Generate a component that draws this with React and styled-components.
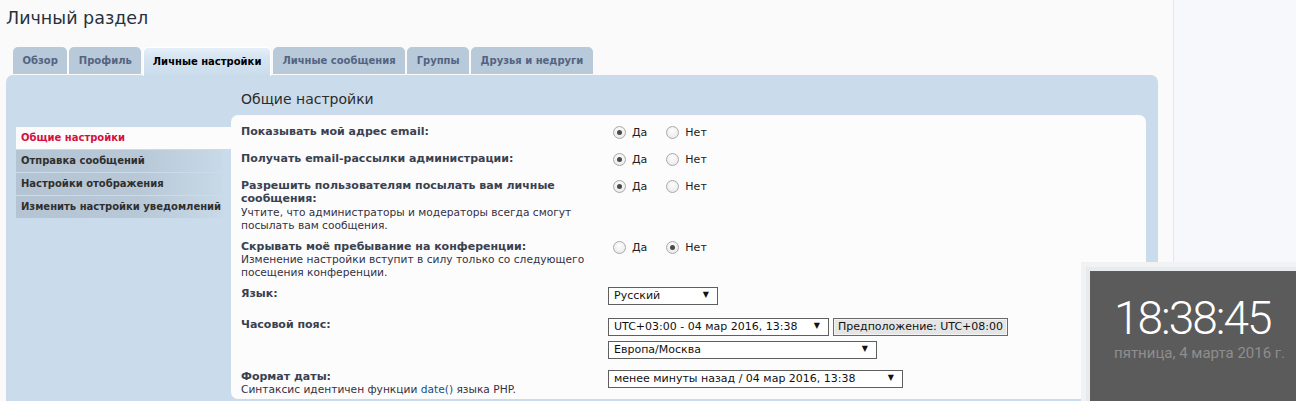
import React from "react";
import styled, { createGlobalStyle } from "styled-components";

const GlobalStyle = createGlobalStyle`
  html, body {
    margin: 0;
    padding: 0;
    background: #fafafa;
    font-family: "DejaVu Sans", Verdana, sans-serif;
    overflow: hidden;
  }
`;

const Page = styled.div`
  position: relative;
  display: flex;
  min-height: 401px;
  height: 401px;
  overflow: hidden;
`;

const Main = styled.div`
  width: 1173px;
  padding: 0 15px 0 6px;
  box-sizing: border-box;
`;

const Side = styled.div`
  flex: 1;
  background: #f6f8fb;
  border-left: 1px solid #e3e7ee;
`;

const Title = styled.h2`
  margin: 6px 0 0;
  font-size: 17.5px;
  line-height: 24px;
  font-weight: normal;
  color: #28313f;
`;

const Tabs = styled.ul`
  list-style: none;
  display: flex;
  align-items: flex-end;
  gap: 2px;
  margin: 17px 0 0;
  padding: 0 0 0 7px;
`;

const Tab = styled.li`
  height: ${(p) => (p.$active ? "29px" : "27px")};
  line-height: ${(p) => (p.$active ? "29px" : "27px")};
  margin-bottom: ${(p) => (p.$active ? "-1px" : "1px")};
  padding: 0 9.5px;
  border-radius: 5px 5px 0 0;
  font-size: 10px;
  font-weight: bold;
  color: ${(p) => (p.$active ? "#000" : "#536482")};
  background: ${(p) =>
    p.$active
      ? "linear-gradient(to bottom, #e6f0f9 0%, #d5e4f1 40%, #cadceb 100%)"
      : "#b8c9d9"};
  box-shadow: ${(p) => (p.$active ? "inset 0 1px 0 #fff, inset 1px 0 0 #fff, inset -1px 0 0 #fff" : "none")};
  position: relative;
  z-index: 1;
`;

const Panel = styled.div`
  display: flex;
  background: #cadceb;
  border-radius: 7px 7px 0 0;
  padding: 0 12px 0 10px;
  height: 340px;
`;

const Menu = styled.ul`
  list-style: none;
  width: 215px;
  flex: none;
  margin: 0;
  padding: 52px 0 0;
`;

const MenuItem = styled.li`
  height: 22px;
  line-height: 22px;
  margin-bottom: 1px;
  margin-right: ${(p) => (p.$active ? "0" : "8px")};
  padding-left: 5px;
  font-size: 10px;
  font-weight: bold;
  white-space: nowrap;
  color: ${(p) => (p.$active ? "#d31141" : "#2f2f2f")};
  background: ${(p) =>
    p.$active
      ? "#fcfcfc"
      : "linear-gradient(to right, #b4c4d3 0%, #b8c8d7 60%, #c8d9e8 100%)"};
`;

const Content = styled.div`
  flex: 1;
  display: flex;
  flex-direction: column;
`;

const Heading = styled.h3`
  margin: 0;
  padding: 15px 0 0 10px;
  height: 25px;
  font-size: 14px;
  line-height: 18px;
  font-weight: normal;
  color: #2b2b2b;
`;

const Box = styled.div`
  background: #fcfcfc;
  border-radius: 7px;
  padding: 6px 10px 8px;
  height: 270px;
`;

const Row = styled.dl`
  display: grid;
  grid-template-columns: 367px 1fr;
  margin: 0;
  padding: 4px 0 3px;
`;

const Dt = styled.dt`
  font-size: 11px;
  line-height: 13.4px;
  white-space: nowrap;
`;

const Label = styled.div`
  font-weight: bold;
  color: #3a4150;
`;

const Explain = styled.div`
  font-size: 10.65px;
  color: #35303f;
`;

const Link = styled.a`
  color: #105289;
  text-decoration: none;
`;

const Options = styled.dd`
  margin: 0;
  display: flex;
  flex-direction: ${(p) => (p.$column ? "column" : "row")};
  align-items: flex-start;
  gap: 5px;
  min-height: 20px;
  padding-bottom: ${(p) => (p.$column ? "4px" : "0")};
`;

const Choice = styled.label`
  display: flex;
  align-items: center;
  height: 15px;
  margin-right: 9px;
  font-size: 11px;
  color: #222;
`;

const Radio = styled.span`
  width: 11px;
  height: 11px;
  margin: 0 6px 0 5px;
  border-radius: 50%;
  border: 1px solid #a9a9a9;
  background: radial-gradient(circle at 50% 35%, #fdfdfd 0%, #e6e6e6 100%);
  display: flex;
  align-items: center;
  justify-content: center;
  &::after {
    content: "";
    width: 5px;
    height: 5px;
    border-radius: 50%;
    background: ${(p) => (p.$checked ? "#4a4a4a" : "transparent")};
  }
`;

const SelectLine = styled.div`
  display: flex;
  gap: 4px;
`;

const Select = styled.div`
  width: ${(p) => p.$width}px;
  height: 18px;
  box-sizing: border-box;
  border: 1px solid #5f5f5f;
  background: #fff;
  display: flex;
  align-items: center;
  justify-content: space-between;
  padding: 0 8px 0 5px;
  font-size: 11px;
  color: #111;
  white-space: nowrap;
  &::after {
    content: "▼";
    font-size: 8px;
    color: #111;
    margin-top: -3px;
  }
`;

const Guess = styled.button`
  height: 18px;
  box-sizing: border-box;
  border: 1px solid #6a6a6a;
  box-shadow: inset 0 0 0 1px #f4f4f4;
  background: #e5e5e5;
  padding: 0 4px;
  font-family: "DejaVu Sans", Verdana, sans-serif;
  font-size: 11px;
  color: #111;
  white-space: nowrap;
`;

const Clock = styled.div`
  position: absolute;
  left: 1090px;
  top: 271px;
  width: 206px;
  height: 140px;
  background: #5b5b5b;
  box-shadow: 0 0 0 4px #e8ebee, 0 0 0 9px #f0f2f4;
  padding: 22px 0 0 24px;
  box-sizing: border-box;
  font-family: Roboto, "Open Sans", sans-serif;
`;

const Time = styled.div`
  font-size: 46px;
  font-weight: 300;
  line-height: 50px;
  color: #fff;
  letter-spacing: -2px;
`;

const DateText = styled.div`
  margin-top: 1px;
  font-size: 15px;
  color: #8e8e8e;
`;

const tabs = [
  "Обзор",
  "Профиль",
  "Личные настройки",
  "Личные сообщения",
  "Группы",
  "Друзья и недруги",
];

const menu = [
  "Общие настройки",
  "Отправка сообщений",
  "Настройки отображения",
  "Изменить настройки уведомлений",
];

function YesNo({ yes }) {
  return (
    <Options>
      <Choice>
        <Radio $checked={yes} />
        Да
      </Choice>
      <Choice>
        <Radio $checked={!yes} />
        Нет
      </Choice>
    </Options>
  );
}

export default function App() {
  return (
    <Page>
      <GlobalStyle />
      <Main>
        <Title>Личный раздел</Title>
        <Tabs>
          {tabs.map((t, i) => (
            <Tab key={t} $active={i === 2}>
              {t}
            </Tab>
          ))}
        </Tabs>
        <Panel>
          <Menu>
            {menu.map((m, i) => (
              <MenuItem key={m} $active={i === 0}>
                {m}
              </MenuItem>
            ))}
          </Menu>
          <Content>
            <Heading>Общие настройки</Heading>
            <Box>
              <Row>
                <Dt>
                  <Label>Показывать мой адрес email:</Label>
                </Dt>
                <YesNo yes />
              </Row>
              <Row>
                <Dt>
                  <Label>Получать email-рассылки администрации:</Label>
                </Dt>
                <YesNo yes />
              </Row>
              <Row>
                <Dt>
                  <Label>
                    Разрешить пользователям посылать вам личные
                    <br />
                    сообщения:
                  </Label>
                  <Explain>
                    Учтите, что администраторы и модераторы всегда смогут
                    <br />
                    посылать вам сообщения.
                  </Explain>
                </Dt>
                <YesNo yes />
              </Row>
              <Row>
                <Dt>
                  <Label>Скрывать моё пребывание на конференции:</Label>
                  <Explain>
                    Изменение настройки вступит в силу только со следующего
                    <br />
                    посещения конференции.
                  </Explain>
                </Dt>
                <YesNo yes={false} />
              </Row>
              <Row>
                <Dt>
                  <Label>Язык:</Label>
                </Dt>
                <Options $column>
                  <Select $width={110}>Русский</Select>
                </Options>
              </Row>
              <Row>
                <Dt>
                  <Label>Часовой пояс:</Label>
                </Dt>
                <Options $column>
                  <SelectLine>
                    <Select $width={221}>UTC+03:00 - 04 мар 2016, 13:38</Select>
                    <Guess>Предположение: UTC+08:00</Guess>
                  </SelectLine>
                  <Select $width={269}>Европа/Москва</Select>
                </Options>
              </Row>
              <Row>
                <Dt>
                  <Label>Формат даты:</Label>
                  <Explain>
                    Синтаксис идентичен функции <Link>date()</Link> языка PHP.
                  </Explain>
                </Dt>
                <Options $column>
                  <Select $width={295}>менее минуты назад / 04 мар 2016, 13:38</Select>
                </Options>
              </Row>
            </Box>
          </Content>
        </Panel>
      </Main>
      <Side />
      <Clock>
        <Time>18:38:45</Time>
        <DateText>пятница, 4 марта 2016 г.</DateText>
      </Clock>
    </Page>
  );
}
